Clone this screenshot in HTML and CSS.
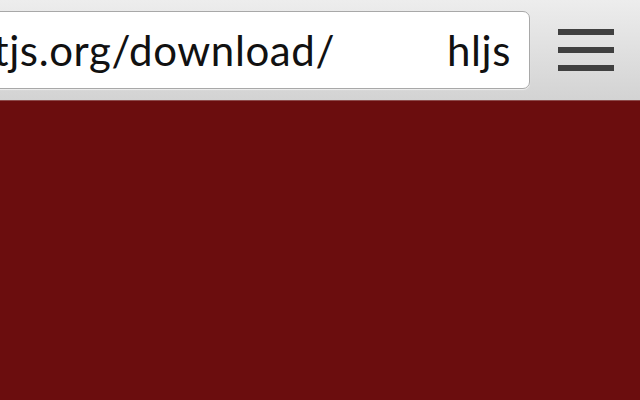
FILE: index.html
```html
<!DOCTYPE html>
<html>
<head>
<meta charset="utf-8">
<link rel="stylesheet" href="styles.css">
</head>
<body>
<div class="toolbar">
  <div class="urlbox">
    <div class="url"><span>highlightjs.org/download/</span></div>
    <div class="title">hljs</div>
  </div>
  <div class="menu">
    <span class="bar"></span>
    <span class="bar"></span>
    <span class="bar"></span>
  </div>
</div>
<div class="page"></div>
</body>
</html>
```
FILE: styles.css
```css
html, body {
  margin: 0;
  padding: 0;
  height: 100%;
  background: #6b0d0e;
  overflow: hidden;
}
.toolbar {
  height: 101px;
  box-sizing: border-box;
  border-bottom: 1px solid #8c4a4a;
  background: linear-gradient(#ededed, #d3d3d3);
  display: flex;
  align-items: center;
}
.urlbox {
  margin-left: -20px;
  width: 550px;
  height: 78px;
  box-sizing: border-box;
  background: #fff;
  border: 1px solid #a8a8a8;
  border-radius: 7px;
  box-shadow: 0 1px 1px rgba(255,255,255,0.6);
  display: flex;
  align-items: center;
  font-family: Lato, "Noto Sans", sans-serif;
  font-size: 42px;
  letter-spacing: 0.6px;
  color: #111;
}
.url {
  width: 354px;
  overflow: hidden;
  display: flex;
  justify-content: flex-end;
  white-space: nowrap;
}
.title {
  margin-left: auto;
  margin-right: 18px;
}
.menu {
  margin-left: 28px;
  width: 56px;
  display: flex;
  flex-direction: column;
  gap: 12px;
}
.bar {
  display: block;
  height: 6px;
  background: #404040;
}
```
